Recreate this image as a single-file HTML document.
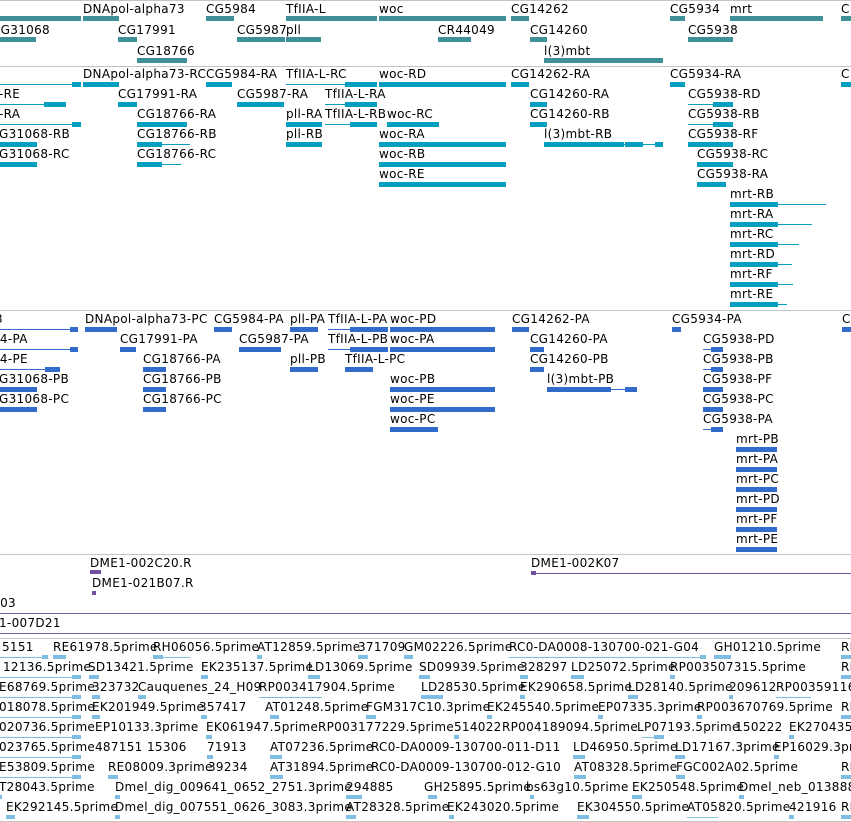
<!DOCTYPE html>
<html><head><meta charset="utf-8"><style>
html,body{margin:0;padding:0;background:#fff;}
#c{position:relative;width:851px;height:822px;overflow:hidden;background:#fff;font-family:"DejaVu Sans","Liberation Sans",sans-serif;font-size:12px;color:#000;}
i{position:absolute;font-style:normal;white-space:nowrap;line-height:14px;letter-spacing:0.3px;}
b{position:absolute;display:block;height:5px;}
.a b,b.a{background:#3f9098}
.t{background:#069fc0}
.u{background:#316ccc}
.p{background:#6f4fa0}
.l{background:#80bde3}
.h{position:absolute;left:0;width:851px;height:1px;background:#c4c4c4}
.ln{height:1px!important}
</style></head><body><div id="c">
<div class="h" style="top:0"></div>
<div class="h" style="top:66px"></div>
<div class="h" style="top:310px"></div>
<div class="h" style="top:554px"></div>
<div class="h" style="top:613px;background:#7a5fa8"></div>
<div class="h" style="top:633px;background:#7a5fa8"></div>
<div class="h" style="top:638px"></div>
<div class="h" style="top:821px"></div>

<!-- Track 1 -->
<i style="left:83px;top:2px">DNApol-alpha73</i><i style="left:206px;top:2px">CG5984</i><i style="left:286px;top:2px">TfIIA-L</i><i style="left:379px;top:2px">woc</i><i style="left:511px;top:2px">CG14262</i><i style="left:670px;top:2px">CG5934</i><i style="left:730px;top:2px">mrt</i><i style="left:841px;top:2px">C</i>
<i style="left:-8px;top:23px">CG31068</i><i style="left:118px;top:23px">CG17991</i><i style="left:237px;top:23px">CG5987</i><i style="left:286px;top:23px">pll</i><i style="left:438px;top:23px">CR44049</i><i style="left:530px;top:23px">CG14260</i><i style="left:688px;top:23px">CG5938</i>
<i style="left:137px;top:44px">CG18766</i><i style="left:544px;top:44px">l(3)mbt</i>
<b class="a" style="left:0;top:16px;width:81px"></b><b class="a" style="left:83px;top:16px;width:36px"></b><b class="a" style="left:206px;top:16px;width:28px"></b><b class="a" style="left:286px;top:16px;width:91px"></b><b class="a" style="left:379px;top:16px;width:127px"></b><b class="a" style="left:511px;top:16px;width:18px"></b><b class="a" style="left:670px;top:16px;width:15px"></b><b class="a" style="left:730px;top:16px;width:93px"></b><b class="a" style="left:841px;top:16px;width:10px"></b>
<b class="a" style="left:0;top:37px;width:36px"></b><b class="a" style="left:118px;top:37px;width:19px"></b><b class="a" style="left:237px;top:37px;width:48px"></b><b class="a" style="left:286px;top:37px;width:35px"></b><b class="a" style="left:438px;top:37px;width:33px"></b><b class="a" style="left:530px;top:37px;width:17px"></b><b class="a" style="left:688px;top:37px;width:45px"></b>
<b class="a" style="left:137px;top:58px;width:50px"></b><b class="a" style="left:544px;top:58px;width:119px"></b>

<!-- Track 2 -->
<i style="left:83px;top:67px">DNApol-alpha73-RC</i><i style="left:206px;top:67px">CG5984-RA</i><i style="left:286px;top:67px">TfIIA-L-RC</i><i style="left:379px;top:67px">woc-RD</i><i style="left:511px;top:67px">CG14262-RA</i><i style="left:670px;top:67px">CG5934-RA</i><i style="left:841px;top:67px">C</i>
<i style="left:-1px;top:87px">-RE</i><i style="left:118px;top:87px">CG17991-RA</i><i style="left:237px;top:87px">CG5987-RA</i><i style="left:325px;top:87px">TfIIA-L-RA</i><i style="left:530px;top:87px">CG14260-RA</i><i style="left:688px;top:87px">CG5938-RD</i>
<i style="left:-1px;top:107px">-RA</i><i style="left:137px;top:107px">CG18766-RA</i><i style="left:286px;top:107px">pll-RA</i><i style="left:325px;top:107px">TfIIA-L-RB</i><i style="left:387px;top:107px">woc-RC</i><i style="left:530px;top:107px">CG14260-RB</i><i style="left:688px;top:107px">CG5938-RB</i>
<i style="left:-1px;top:127px">G31068-RB</i><i style="left:137px;top:127px">CG18766-RB</i><i style="left:286px;top:127px">pll-RB</i><i style="left:379px;top:127px">woc-RA</i><i style="left:544px;top:127px">l(3)mbt-RB</i><i style="left:688px;top:127px">CG5938-RF</i>
<i style="left:-1px;top:147px">G31068-RC</i><i style="left:137px;top:147px">CG18766-RC</i><i style="left:379px;top:147px">woc-RB</i><i style="left:697px;top:147px">CG5938-RC</i>
<i style="left:379px;top:167px">woc-RE</i><i style="left:697px;top:167px">CG5938-RA</i>
<i style="left:730px;top:187px">mrt-RB</i><i style="left:730px;top:207px">mrt-RA</i><i style="left:730px;top:227px">mrt-RC</i><i style="left:730px;top:247px">mrt-RD</i><i style="left:730px;top:267px">mrt-RF</i><i style="left:730px;top:287px">mrt-RE</i>

<b class="t ln" style="left:0;top:84px;width:80px"></b><b class="t" style="left:72px;top:82px;width:9px"></b><b class="t" style="left:83px;top:82px;width:36px"></b><b class="t" style="left:206px;top:82px;width:26px"></b><b class="t ln" style="left:286px;top:84px;width:91px"></b><b class="t" style="left:345px;top:82px;width:32px"></b><b class="t" style="left:379px;top:82px;width:127px"></b><b class="t" style="left:511px;top:82px;width:18px"></b><b class="t" style="left:670px;top:82px;width:15px"></b><b class="t" style="left:841px;top:82px;width:10px"></b>
<b class="t ln" style="left:0;top:104px;width:66px"></b><b class="t" style="left:44px;top:102px;width:22px"></b><b class="t" style="left:118px;top:102px;width:19px"></b><b class="t" style="left:237px;top:102px;width:47px"></b><b class="t ln" style="left:325px;top:104px;width:52px"></b><b class="t" style="left:345px;top:102px;width:32px"></b><b class="t" style="left:530px;top:102px;width:17px"></b><b class="t ln" style="left:688px;top:104px;width:45px"></b><b class="t" style="left:713px;top:102px;width:20px"></b>
<b class="t" style="left:0;top:122px;width:81px;height:1px;top:124px"></b><b class="t" style="left:72px;top:122px;width:9px"></b><b class="t" style="left:137px;top:122px;width:50px"></b><b class="t" style="left:286px;top:122px;width:36px"></b><b class="t ln" style="left:325px;top:124px;width:52px"></b><b class="t" style="left:350px;top:122px;width:27px"></b><b class="t" style="left:387px;top:122px;width:52px"></b><b class="t" style="left:530px;top:122px;width:17px"></b><b class="t ln" style="left:688px;top:124px;width:45px"></b><b class="t" style="left:713px;top:122px;width:20px"></b>
<b class="t" style="left:0;top:142px;width:37px"></b><b class="t" style="left:137px;top:142px;width:25px"></b><b class="t ln" style="left:137px;top:144px;width:53px"></b><b class="t" style="left:286px;top:142px;width:36px"></b><b class="t" style="left:379px;top:142px;width:127px"></b><b class="t" style="left:544px;top:142px;width:80px"></b><b class="t ln" style="left:544px;top:144px;width:119px"></b><b class="t" style="left:625px;top:142px;width:18px"></b><b class="t" style="left:655px;top:142px;width:8px"></b><b class="t" style="left:688px;top:142px;width:45px"></b>
<b class="t" style="left:0;top:162px;width:37px"></b><b class="t" style="left:137px;top:162px;width:25px"></b><b class="t ln" style="left:137px;top:164px;width:44px"></b><b class="t" style="left:379px;top:162px;width:127px"></b><b class="t" style="left:697px;top:162px;width:36px"></b>
<b class="t" style="left:379px;top:182px;width:127px"></b><b class="t" style="left:697px;top:182px;width:29px"></b>
<b class="t" style="left:730px;top:202px;width:48px"></b><b class="t ln" style="left:730px;top:204px;width:96px"></b>
<b class="t" style="left:730px;top:222px;width:48px"></b><b class="t ln" style="left:730px;top:224px;width:82px"></b>
<b class="t" style="left:730px;top:242px;width:48px"></b><b class="t ln" style="left:730px;top:244px;width:69px"></b>
<b class="t" style="left:730px;top:262px;width:48px"></b><b class="t ln" style="left:730px;top:264px;width:62px"></b>
<b class="t" style="left:730px;top:282px;width:48px"></b><b class="t ln" style="left:730px;top:284px;width:63px"></b>
<b class="t" style="left:730px;top:302px;width:48px"></b><b class="t ln" style="left:730px;top:304px;width:57px"></b>

<!-- Track 3 -->
<i style="left:-5px;top:312px">3</i><i style="left:85px;top:312px">DNApol-alpha73-PC</i><i style="left:214px;top:312px">CG5984-PA</i><i style="left:290px;top:312px">pll-PA</i><i style="left:328px;top:312px">TfIIA-L-PA</i><i style="left:390px;top:312px">woc-PD</i><i style="left:512px;top:312px">CG14262-PA</i><i style="left:672px;top:312px">CG5934-PA</i><i style="left:842px;top:312px">C</i>
<i style="left:-8px;top:332px">54-PA</i><i style="left:120px;top:332px">CG17991-PA</i><i style="left:239px;top:332px">CG5987-PA</i><i style="left:328px;top:332px">TfIIA-L-PB</i><i style="left:390px;top:332px">woc-PA</i><i style="left:530px;top:332px">CG14260-PA</i><i style="left:703px;top:332px">CG5938-PD</i>
<i style="left:-8px;top:352px">54-PE</i><i style="left:143px;top:352px">CG18766-PA</i><i style="left:290px;top:352px">pll-PB</i><i style="left:345px;top:352px">TfIIA-L-PC</i><i style="left:530px;top:352px">CG14260-PB</i><i style="left:547px;top:372px">l(3)mbt-PB</i><i style="left:703px;top:352px">CG5938-PB</i>
<i style="left:-1px;top:372px">G31068-PB</i><i style="left:143px;top:372px">CG18766-PB</i><i style="left:390px;top:372px">woc-PB</i><i style="left:703px;top:372px">CG5938-PF</i>
<i style="left:-1px;top:392px">G31068-PC</i><i style="left:143px;top:392px">CG18766-PC</i><i style="left:390px;top:392px">woc-PE</i><i style="left:703px;top:392px">CG5938-PC</i>
<i style="left:390px;top:412px">woc-PC</i><i style="left:703px;top:412px">CG5938-PA</i>
<i style="left:736px;top:432px">mrt-PB</i><i style="left:736px;top:452px">mrt-PA</i><i style="left:736px;top:472px">mrt-PC</i><i style="left:736px;top:492px">mrt-PD</i><i style="left:736px;top:512px">mrt-PF</i><i style="left:736px;top:532px">mrt-PE</i>

<b class="u ln" style="left:0;top:329px;width:78px"></b><b class="u" style="left:70px;top:327px;width:8px"></b><b class="u" style="left:85px;top:327px;width:32px"></b><b class="u" style="left:214px;top:327px;width:18px"></b><b class="u" style="left:290px;top:327px;width:28px"></b><b class="u ln" style="left:328px;top:329px;width:60px"></b><b class="u" style="left:350px;top:327px;width:38px"></b><b class="u" style="left:390px;top:327px;width:105px"></b><b class="u" style="left:512px;top:327px;width:17px"></b><b class="u" style="left:672px;top:327px;width:9px"></b><b class="u" style="left:842px;top:327px;width:9px"></b>
<b class="u ln" style="left:0;top:349px;width:78px"></b><b class="u" style="left:70px;top:347px;width:8px"></b><b class="u" style="left:120px;top:347px;width:16px"></b><b class="u" style="left:239px;top:347px;width:42px"></b><b class="u ln" style="left:328px;top:349px;width:60px"></b><b class="u" style="left:350px;top:347px;width:38px"></b><b class="u" style="left:390px;top:347px;width:105px"></b><b class="u" style="left:530px;top:347px;width:14px"></b><b class="u ln" style="left:703px;top:349px;width:20px"></b><b class="u" style="left:711px;top:347px;width:12px"></b>
<b class="u ln" style="left:0;top:369px;width:60px"></b><b class="u" style="left:45px;top:367px;width:15px"></b><b class="u" style="left:143px;top:367px;width:23px"></b><b class="u" style="left:290px;top:367px;width:28px"></b><b class="u" style="left:345px;top:367px;width:28px"></b><b class="u" style="left:530px;top:367px;width:14px"></b><b class="u ln" style="left:703px;top:369px;width:20px"></b><b class="u" style="left:711px;top:367px;width:12px"></b>
<b class="u" style="left:0;top:387px;width:37px"></b><b class="u" style="left:143px;top:387px;width:23px"></b><b class="u" style="left:390px;top:387px;width:105px"></b><b class="u" style="left:547px;top:387px;width:64px"></b><b class="u ln" style="left:547px;top:389px;width:90px"></b><b class="u" style="left:625px;top:387px;width:12px"></b><b class="u" style="left:703px;top:387px;width:20px"></b>
<b class="u" style="left:0;top:407px;width:37px"></b><b class="u" style="left:143px;top:407px;width:23px"></b><b class="u" style="left:390px;top:407px;width:105px"></b><b class="u" style="left:703px;top:407px;width:20px"></b>
<b class="u" style="left:390px;top:427px;width:48px"></b><b class="u ln" style="left:703px;top:429px;width:20px"></b><b class="u" style="left:711px;top:427px;width:12px"></b>
<b class="u" style="left:736px;top:447px;width:41px"></b><b class="u" style="left:736px;top:467px;width:41px"></b><b class="u" style="left:736px;top:487px;width:41px"></b><b class="u" style="left:736px;top:507px;width:41px"></b><b class="u" style="left:736px;top:527px;width:41px"></b><b class="u" style="left:736px;top:547px;width:41px"></b>

<!-- Track 4 -->
<i style="left:90px;top:556px">DME1-002C20.R</i><i style="left:531px;top:556px">DME1-002K07</i>
<b class="p" style="left:90px;top:570px;width:11px;height:4px"></b><b class="p ln" style="left:531px;top:573px;width:320px"></b><b class="p" style="left:531px;top:571px;width:5px;height:4px"></b>
<i style="left:92px;top:576px">DME1-021B07.R</i><b class="p" style="left:92px;top:591px;width:4px;height:4px"></b>
<i style="left:-4px;top:596px">.03</i>
<i style="left:-1px;top:616px">1-007D21</i>

<!-- Track 5 -->
<i style="left:2px;top:640px">5151</i><i style="left:53px;top:640px">RE61978.5prime</i><i style="left:153px;top:640px">RH06056.5prime</i><i style="left:257px;top:640px">AT12859.5prime</i><i style="left:358px;top:640px">371709</i><i style="left:404px;top:640px">GM02226.5prime</i><i style="left:509px;top:640px">RC0-DA0008-130700-021-G04</i><i style="left:714px;top:640px">GH01210.5prime</i><i style="left:841px;top:640px">RI</i>
<i style="left:3px;top:660px">12136.5prime</i><i style="left:88px;top:660px">SD13421.5prime</i><i style="left:201px;top:660px">EK235137.5prime</i><i style="left:308px;top:660px">LD13069.5prime</i><i style="left:419px;top:660px">SD09939.5prime</i><i style="left:520px;top:660px">328297</i><i style="left:571px;top:660px">LD25072.5prime</i><i style="left:670px;top:660px">RP003507315.5prime</i><i style="left:841px;top:660px">RI</i>
<i style="left:-1px;top:680px">E68769.5prime</i><i style="left:92px;top:680px">323732</i><i style="left:138px;top:680px">Cauquenes_24_H09</i><i style="left:259px;top:680px">RP003417904.5prime</i><i style="left:421px;top:680px">LD28530.5prime</i><i style="left:520px;top:680px">EK290658.5prime</i><i style="left:628px;top:680px">LD28140.5prime</i><i style="left:729px;top:680px">209612</i><i style="left:776px;top:680px">RP00359116</i>
<i style="left:-1px;top:700px">018078.5prime</i><i style="left:92px;top:700px">EK201949.5prime</i><i style="left:199px;top:700px">357417</i><i style="left:265px;top:700px">AT01248.5prime</i><i style="left:366px;top:700px">FGM317C10.3prime</i><i style="left:487px;top:700px">EK245540.5prime</i><i style="left:598px;top:700px">EP07335.3prime</i><i style="left:697px;top:700px">RP003670769.5prime</i><i style="left:841px;top:700px">RI</i>
<i style="left:-1px;top:720px">020736.5prime</i><i style="left:95px;top:720px">EP10133.3prime</i><i style="left:206px;top:720px">EK061947.5prime</i><i style="left:318px;top:720px">RP003177229.5prime</i><i style="left:454px;top:720px">514022</i><i style="left:502px;top:720px">RP004189094.5prime</i><i style="left:637px;top:720px">LP07193.5prime</i><i style="left:735px;top:720px">150222</i><i style="left:789px;top:720px">EK270435</i>
<i style="left:-1px;top:740px">023765.5prime</i><i style="left:95px;top:740px">487151</i><i style="left:147px;top:740px">15306</i><i style="left:207px;top:740px">71913</i><i style="left:270px;top:740px">AT07236.5prime</i><i style="left:371px;top:740px">RC0-DA0009-130700-011-D11</i><i style="left:573px;top:740px">LD46950.5prime</i><i style="left:675px;top:740px">LD17167.3prime</i><i style="left:774px;top:740px">EP16029.3prime</i>
<i style="left:-1px;top:760px">E53809.5prime</i><i style="left:108px;top:760px">RE08009.3prime</i><i style="left:208px;top:760px">39234</i><i style="left:270px;top:760px">AT31894.5prime</i><i style="left:371px;top:760px">RC0-DA0009-130700-012-G10</i><i style="left:574px;top:760px">AT08328.5prime</i><i style="left:676px;top:760px">FGC002A02.5prime</i><i style="left:841px;top:760px">RI</i>
<i style="left:-1px;top:780px">T28043.5prime</i><i style="left:115px;top:780px">Dmel_dig_009641_0652_2751.3prime</i><i style="left:346px;top:780px">294885</i><i style="left:424px;top:780px">GH25895.5prime</i><i style="left:526px;top:780px">bs63g10.5prime</i><i style="left:632px;top:780px">EK250548.5prime</i><i style="left:739px;top:780px">Dmel_neb_013888</i>
<i style="left:6px;top:800px">EK292145.5prime</i><i style="left:115px;top:800px">Dmel_dig_007551_0626_3083.3prime</i><i style="left:346px;top:800px">AT28328.5prime</i><i style="left:447px;top:800px">EK243020.5prime</i><i style="left:577px;top:800px">EK304550.5prime</i><i style="left:687px;top:800px">AT05820.5prime</i><i style="left:789px;top:800px">421916</i><i style="left:841px;top:800px">RI</i>

<b class="l ln" style="left:0;top:657px;width:48px"></b><b class="l" style="left:42px;top:655px;width:6px;height:4px"></b><b class="l" style="left:53px;top:655px;width:13px;height:4px"></b><b class="l ln" style="left:153px;top:657px;width:37px"></b><b class="l" style="left:153px;top:655px;width:10px;height:4px"></b><b class="l" style="left:257px;top:655px;width:5px;height:4px"></b><b class="l" style="left:358px;top:655px;width:10px;height:4px"></b><b class="l" style="left:404px;top:655px;width:9px;height:4px"></b><b class="l ln" style="left:509px;top:657px;width:197px"></b><b class="l" style="left:700px;top:655px;width:6px;height:4px"></b><b class="l" style="left:714px;top:655px;width:17px;height:4px"></b><b class="l" style="left:841px;top:655px;width:10px;height:4px"></b>
<b class="l ln" style="left:0;top:677px;width:81px"></b><b class="l" style="left:72px;top:675px;width:9px;height:4px"></b><b class="l" style="left:89px;top:675px;width:10px;height:4px"></b><b class="l" style="left:201px;top:675px;width:7px;height:4px"></b><b class="l" style="left:308px;top:675px;width:12px;height:4px"></b><b class="l" style="left:419px;top:675px;width:11px;height:4px"></b><b class="l" style="left:520px;top:675px;width:8px;height:4px"></b><b class="l" style="left:571px;top:675px;width:13px;height:4px"></b><b class="l" style="left:670px;top:675px;width:5px;height:4px"></b><b class="l" style="left:841px;top:675px;width:10px;height:4px"></b>
<b class="l ln" style="left:0;top:697px;width:81px"></b><b class="l" style="left:72px;top:695px;width:9px;height:4px"></b><b class="l" style="left:92px;top:695px;width:8px;height:4px"></b><b class="l" style="left:138px;top:695px;width:8px;height:4px"></b><b class="l ln" style="left:259px;top:697px;width:63px"></b><b class="l" style="left:421px;top:695px;width:22px;height:4px"></b><b class="l" style="left:520px;top:695px;width:5px;height:4px"></b><b class="l" style="left:628px;top:695px;width:10px;height:4px"></b><b class="l" style="left:729px;top:695px;width:4px;height:4px"></b><b class="l ln" style="left:776px;top:697px;width:35px"></b>
<b class="l ln" style="left:0;top:717px;width:81px"></b><b class="l" style="left:72px;top:715px;width:9px;height:4px"></b><b class="l" style="left:92px;top:715px;width:8px;height:4px"></b><b class="l" style="left:201px;top:715px;width:6px;height:4px"></b><b class="l" style="left:270px;top:715px;width:9px;height:4px"></b><b class="l" style="left:366px;top:715px;width:10px;height:4px"></b><b class="l" style="left:487px;top:715px;width:5px;height:4px"></b><b class="l" style="left:598px;top:715px;width:5px;height:4px"></b><b class="l" style="left:697px;top:715px;width:5px;height:4px"></b><b class="l" style="left:841px;top:715px;width:10px;height:4px"></b>
<b class="l ln" style="left:0;top:737px;width:81px"></b><b class="l" style="left:72px;top:735px;width:9px;height:4px"></b><b class="l" style="left:206px;top:735px;width:6px;height:4px"></b><b class="l" style="left:454px;top:735px;width:5px;height:4px"></b><b class="l ln" style="left:642px;top:737px;width:20px"></b><b class="l" style="left:654px;top:735px;width:10px;height:4px"></b><b class="l" style="left:789px;top:735px;width:5px;height:4px"></b>
<b class="l ln" style="left:0;top:757px;width:81px"></b><b class="l" style="left:72px;top:755px;width:9px;height:4px"></b><b class="l" style="left:207px;top:755px;width:6px;height:4px"></b><b class="l" style="left:270px;top:755px;width:12px;height:4px"></b><b class="l" style="left:573px;top:755px;width:12px;height:4px"></b><b class="l" style="left:675px;top:755px;width:10px;height:4px"></b><b class="l" style="left:774px;top:755px;width:5px;height:4px"></b>
<b class="l ln" style="left:0;top:777px;width:81px"></b><b class="l" style="left:72px;top:775px;width:9px;height:4px"></b><b class="l" style="left:108px;top:775px;width:10px;height:4px"></b><b class="l" style="left:270px;top:775px;width:13px;height:4px"></b><b class="l" style="left:574px;top:775px;width:12px;height:4px"></b><b class="l" style="left:676px;top:775px;width:9px;height:4px"></b><b class="l" style="left:841px;top:775px;width:10px;height:4px"></b>
<b class="l" style="left:0;top:795px;width:2px;height:4px"></b><b class="l" style="left:115px;top:795px;width:5px;height:4px"></b><b class="l" style="left:346px;top:795px;width:16px;height:4px"></b><b class="l" style="left:428px;top:795px;width:9px;height:4px"></b><b class="l" style="left:530px;top:795px;width:4px;height:4px"></b><b class="l" style="left:632px;top:795px;width:10px;height:4px"></b><b class="l" style="left:739px;top:795px;width:5px;height:4px"></b>
<b class="l" style="left:6px;top:815px;width:9px;height:4px"></b><b class="l" style="left:115px;top:815px;width:5px;height:4px"></b><b class="l" style="left:346px;top:815px;width:10px;height:4px"></b><b class="l" style="left:449px;top:815px;width:5px;height:4px"></b><b class="l" style="left:577px;top:815px;width:12px;height:4px"></b><b class="l ln" style="left:687px;top:817px;width:31px"></b><b class="l" style="left:789px;top:815px;width:5px;height:4px"></b><b class="l" style="left:841px;top:815px;width:10px;height:4px"></b>
</div></body></html>
